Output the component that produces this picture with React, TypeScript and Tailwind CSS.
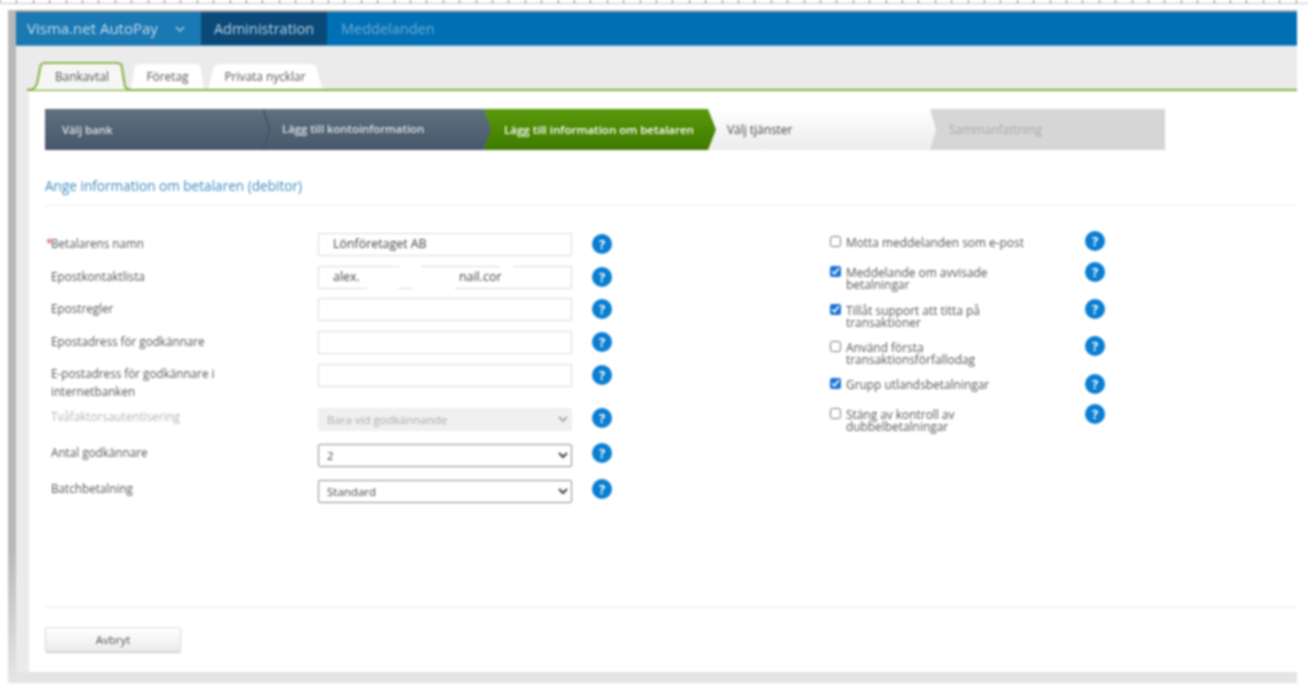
import React from "react";

const leftRows = [
  { label: "Betalarens namn", req: true, value: "Lönföretaget AB", labelCls: "mt-[1px]", rowCls: "" },
  { label: "Epostkontaktlista", value: "alex.", masked: true, labelCls: "mt-[1px]", rowCls: "mt-[10px]" },
  { label: "Epostregler", value: "", labelCls: "mt-[1px]", rowCls: "mt-[9px]" },
  { label: "Epostadress för godkännare", value: "", labelCls: "mt-[1px]", rowCls: "mt-[10px]" },
  { label: "E-postadress för godkännare i internetbanken", value: "", labelCls: "w-[190px]", rowCls: "mt-[10px]" },
];

const selectRows = [
  { label: "Tvåfaktorsautentisering", value: "Bara vid godkännande", disabled: true, rowCls: "mt-[21px]", helpCls: "-mt-[3px]" },
  { label: "Antal godkännare", value: "2", rowCls: "mt-[13px]", helpCls: "-mt-[5px]" },
  { label: "Batchbetalning", value: "Standard", rowCls: "mt-[13px]", helpCls: "-mt-[5px]" },
];

const rightRows = [
  { lines: ["Motta meddelanden som e-post"], checked: false, cls: "h-[31px]", textCls: "mt-[5px]" },
  { lines: ["Meddelande om avvisade", "betalningar"], checked: true, cls: "h-[37px]", textCls: "mt-[4px]" },
  { lines: ["Tillåt support att titta på", "transaktioner"], checked: true, cls: "h-[37px]", textCls: "mt-[5px]" },
  { lines: ["Använd första", "transaktionsförfallodag"], checked: false, cls: "h-[38px]", textCls: "mt-[5px]" },
  { lines: ["Grupp utlandsbetalningar"], checked: true, cls: "h-[30px]", textCls: "mt-[4px]" },
  { lines: ["Stäng av kontroll av", "dubbelbetalningar"], checked: false, cls: "h-[30px]", textCls: "mt-[4px]" },
];

function Help() {
  return (
    <span className="flex h-[20px] w-[20px] shrink-0 items-center justify-center rounded-full bg-[#0a7ed2] text-[13px] font-bold leading-none text-white">
      ?
    </span>
  );
}

function Tab({ label, active, cls }: { label: string; active?: boolean; cls: string }) {
  return (
    <div className={`relative flex items-center justify-center ${cls}`}>
      <svg className="absolute inset-0 h-full w-full" viewBox="0 0 100 100" preserveAspectRatio="none">
        <path
          d={active ? "M0 96 C6 96 8 92 10 70 L13 12 Q14 3 20 3 L84 3 Q90 3 91 12 L94 80 Q95 96 100 96" : "M0 100 L5 12 Q6 0 14 0 L88 0 Q94 0 95 12 L100 100 Z"}
          fill={active ? "#f6f6f6" : "#ffffff"}
          stroke={active ? "#7fb13c" : "none"}
          strokeWidth="2"
          vectorEffect="non-scaling-stroke"
        />
      </svg>
      <span className="relative text-[11.9px] text-[#555]">{label}</span>
    </div>
  );
}

export default function App() {
  return (
    <div className="h-[690px] w-[1308px] overflow-hidden bg-white font-['Open_Sans',sans-serif] blur-[0.8px]">
      <div className="h-[10px]">
        <div className="h-[4px] border-b border-b-[#c4c4c4] bg-[repeating-linear-gradient(90deg,#777_0,#777_1px,transparent_1px,transparent_16.4px)]"></div>
      </div>
      <div className="ml-[8px] flex h-[673px] w-[1289px]">
        <div className="w-[8px] bg-gradient-to-b from-[#b8b8b8] from-80% to-[#e6e6e6]"></div>
        <div className="flex min-w-0 flex-1 flex-col">
          <div className="h-[2px] bg-[#a9a9a9]"></div>

          {/* Top navigation */}
          <div className="flex h-[34px] items-center border-b border-b-[#4f9bcb] bg-[#0070b5]">
            <div className="flex h-full w-[185px] items-center gap-[17px] bg-[#1a78b2] pl-[11px] text-[15px] text-[#c6deee]">
              Visma.net AutoPay
              <svg width="10" height="6" viewBox="0 0 10 6" fill="none" stroke="#c6deee" strokeWidth="1.2">
                <path d="M1 1l4 4 4-4" />
              </svg>
            </div>
            <div className="flex h-full w-[126px] items-center justify-center bg-[#0b4a78] text-[14.5px] text-[#b9d3e6]">
              Administration
            </div>
            <div className="pl-[14px] text-[14.5px] text-[#73abd2]">Meddelanden</div>
          </div>

          {/* Tabs */}
          <div className="h-[45px] bg-[#ebebeb] pl-[11px]">
            <div className="flex h-full items-end border-b-2 border-b-[#7fb13c]">
              <Tab label="Bankavtal" active cls="-mb-[2px] z-10 h-[29px] w-[104px] pl-[6px]" />
              <Tab label="Företag" cls="h-[25px] w-[73px]" />
              <Tab label="Privata nycklar" cls="ml-[4px] h-[25px] w-[114px]" />
            </div>
          </div>

          <div className="flex min-h-0 flex-1">
            <div className="w-[13px] bg-[#ebebeb]"></div>
            <div className="flex min-w-0 flex-1 flex-col bg-white pl-[16px] pt-[18px]">
              {/* Wizard steps */}
              <div className="flex h-[41px] w-[1120px] bg-[#d6d6d6]">
                <div className="relative z-40 flex w-[226px] items-center bg-gradient-to-b from-[#5f7080] to-[#46596a] pl-[17px] text-[11.4px] font-semibold text-[#dde3e8] [clip-path:polygon(0_0,calc(100%_-_7px)_0,100%_50%,calc(100%_-_7px)_100%,0_100%)]">
                  Välj bank
                  <svg className="absolute right-0 top-0 h-full w-[8px]" viewBox="0 0 8 41" fill="none" stroke="#3f5262" strokeWidth="1.5">
                    <path d="M0 0l7 20.5L0 41" />
                  </svg>
                </div>
                <div className="relative z-30 -ml-[7px] flex w-[227px] items-center bg-gradient-to-b from-[#5f7080] to-[#46596a] pl-[18px] text-[11.3px] font-semibold text-[#dde3e8] [clip-path:polygon(0_0,calc(100%_-_7px)_0,100%_50%,calc(100%_-_7px)_100%,0_100%)]">
                  Lägg till kontoinformation
                </div>
                <div className="relative z-20 -ml-[7px] flex w-[232px] items-center bg-gradient-to-b from-[#5a9a0c] to-[#3f7a00] pl-[20px] text-[11.5px] font-semibold text-white [clip-path:polygon(0_0,calc(100%_-_8px)_0,100%_50%,calc(100%_-_8px)_100%,0_100%,6px_50%)]">
                  Lägg till information om betalaren
                </div>
                <div className="relative z-10 -ml-[8px] flex w-[228px] items-center bg-gradient-to-b from-[#ffffff] to-[#ececec] pl-[19px] text-[11.9px] text-[#444] [clip-path:polygon(0_0,calc(100%_-_6px)_0,100%_50%,calc(100%_-_6px)_100%,0_100%)]">
                  Välj tjänster
                </div>
                <div className="-ml-[6px] flex items-center pl-[19px] text-[12px] text-[#a9a9a9]">Sammanfattning</div>
              </div>

              <div className="mt-[27px] border-b border-b-[#ececec] pb-[10px] text-[13.6px] leading-[18px] text-[#3f8cc4]">
                Ange information om betalaren (debitor)
              </div>

              {/* Form */}
              <div className="mt-[27px] flex h-[375px] border-b border-b-[#ececec] text-[11.7px] text-[#555]">
                <div className="pl-[6px]">
                  {leftRows.map((r) => (
                    <div key={r.label} className={`flex h-[23px] items-center ${r.rowCls}`}>
                      <div className="w-[267px] self-start">
                        <div className={`relative leading-[18px] ${r.labelCls}`}>
                          {r.req && <span className="absolute -left-[5px] text-[#d33]">*</span>}
                          {r.label}
                        </div>
                      </div>
                      <div className="relative h-[23px] w-[254px] border border-[#dcdcdc] bg-white pl-[14px] text-[12.4px] leading-[20px] text-[#444]">
                        {r.value}
                        {r.masked && (
                          <>
                            <span className="absolute left-[140px] top-0 text-[#444]">nail.cor</span>
                            <span className="absolute -top-[1px] left-[81px] h-[2px] w-[21px] bg-white"></span>
                            <span className="absolute -top-[1px] left-[181px] h-[2px] w-[13px] bg-white"></span>
                            <span className="absolute -bottom-[1px] left-[48px] h-[2px] w-[31px] bg-white"></span>
                            <span className="absolute -bottom-[1px] left-[94px] h-[2px] w-[42px] bg-white"></span>
                          </>
                        )}
                      </div>
                      <div className="ml-[20px] -mt-[1px]">
                        <Help />
                      </div>
                    </div>
                  ))}
                  {selectRows.map((r) => (
                    <div key={r.label} className={`flex h-[23px] items-center ${r.rowCls}`}>
                      <div className={`-mt-[1px] w-[267px] self-start leading-[18px] ${r.disabled ? "text-[#b5b5b5]" : ""}`}>
                        {r.label}
                      </div>
                      <select
                        disabled={r.disabled}
                        defaultValue={r.value}
                        className={`h-[23px] w-[254px] rounded-[2px] pl-[4px] text-[11.5px] ${
                          r.disabled
                            ? "border border-[#f0f0f0] bg-[#f0f0f0] text-[#aaa]"
                            : "border border-[#8c8c8c] bg-white text-[#444]"
                        }`}
                      >
                        <option>{r.value}</option>
                      </select>
                      <div className={`ml-[20px] ${r.helpCls}`}>
                        <Help />
                      </div>
                    </div>
                  ))}
                </div>

                <div className="ml-[218px] -mt-[2px]">
                  {rightRows.map((r) => (
                    <div key={r.lines[0]} className={`flex ${r.cls}`}>
                      <input
                        type="checkbox"
                        readOnly
                        checked={r.checked}
                        className={`m-0 h-[11px] w-[11px] accent-[#1a73d8] ${r.textCls}`}
                      />
                      <div className={`ml-[5px] w-[239px] text-[11.9px] leading-[12px] ${r.textCls}`}>
                        {r.lines.map((l, i) => (
                          <React.Fragment key={l}>
                            {i > 0 && <br />}
                            {l}
                          </React.Fragment>
                        ))}
                      </div>
                      <Help />
                    </div>
                  ))}
                </div>
              </div>

              <div className="flex pt-[19px]">
                <button className="h-[25px] w-[136px] rounded-[2px] border border-[#dadada] bg-gradient-to-b from-[#ffffff] to-[#ececec] text-[11.5px] text-[#555] shadow-[0_1px_1px_#ccc]">
                  Avbryt
                </button>
              </div>
            </div>
          </div>

          <div className="h-[11px] bg-[#e4e4e4]"></div>
        </div>
      </div>
    </div>
  );
}
